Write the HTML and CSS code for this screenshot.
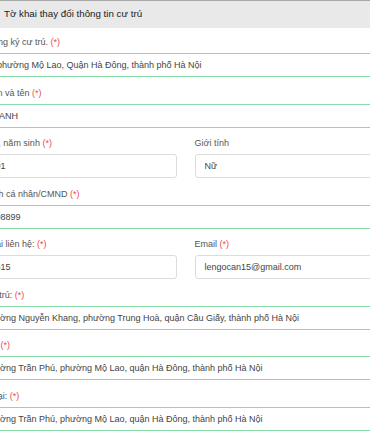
FILE: index.html
```html
<!DOCTYPE html>
<html lang="vi">
<head>
<meta charset="utf-8">
<title>Tờ khai thay đổi thông tin cư trú</title>
<link rel="stylesheet" href="styles.css">
</head>
<body>
<div class="panel">
  <div class="panel-head">Tờ khai thay đổi thông tin cư trú</div>
  <form class="form">
    <div class="field">
      <label class="label">Cơ quan đăng ký cư trú. <span class="req">(*)</span></label>
      <div class="control valid">Công an phường Mộ Lao, Quận Hà Đông, thành phố Hà Nội</div>
    </div>
    <div class="field">
      <label class="label">Họ, chữ đệm và tên <span class="req">(*)</span></label>
      <div class="control valid">LÊ MINH ANH</div>
    </div>
    <div class="row">
      <div class="field">
        <label class="label">Ngày, tháng, năm sinh <span class="req">(*)</span></label>
        <div class="control">19/05/2001</div>
      </div>
      <div class="field">
        <label class="label">Giới tính</label>
        <div class="control">Nữ</div>
      </div>
    </div>
    <div class="field">
      <label class="label">Số định danh cá nhân/CMND <span class="req">(*)</span></label>
      <div class="control valid">001301008899</div>
    </div>
    <div class="row">
      <div class="field">
        <label class="label">Số điện thoại liên hệ: <span class="req">(*)</span></label>
        <div class="control">0912345615</div>
      </div>
      <div class="field">
        <label class="label">Email <span class="req">(*)</span></label>
        <div class="control">lengocan15@gmail.com</div>
      </div>
    </div>
    <div class="field">
      <label class="label">Nơi thường trú: <span class="req">(*)</span></label>
      <div class="control valid">Số 18, đường Nguyễn Khang, phường Trung Hoà, quận Cầu Giấy, thành phố Hà Nội</div>
    </div>
    <div class="field">
      <label class="label">Nơi tạm trú: <span class="req">(*)</span></label>
      <div class="control valid">Số 12, đường Trần Phú, phường Mộ Lao, quận Hà Đông, thành phố Hà Nội</div>
    </div>
    <div class="field">
      <label class="label">Nơi ở hiện tại: <span class="req">(*)</span></label>
      <div class="control valid">Số 12, đường Trần Phú, phường Mộ Lao, quận Hà Đông, thành phố Hà Nội</div>
    </div>
  </form>
</div>
</body>
</html>
```

FILE: styles.css
```css
* {
  box-sizing: border-box;
  margin: 0;
  padding: 0;
}

html,
body {
  background: #fff;
}

body {
  width: 370px;
  height: 440px;
  overflow: hidden;
  font-family: "Liberation Sans", Arial, sans-serif;
}

.panel-head {
  height: 28px;
  background: #e9e9e9;
  border-top: 1px solid #a8a8a8;
  padding-left: 4px;
  font-size: 9.75px;
  line-height: 26px;
  color: #222;
}

.form {
  width: 470.5px;
  margin-left: -49.5px;
  padding-top: 6px;
}

.field {
  margin-bottom: 7.5px;
}

.label {
  display: block;
  font-size: 9px;
  line-height: 16px;
  margin-bottom: 3px;
  color: #555;
}

.req {
  color: #f0474a;
}

.control {
  height: 24px;
  border: 1px solid #dcdcdc;
  border-radius: 3px;
  padding: 0 9px;
  font-size: 9px;
  line-height: 22px;
  color: #444;
  white-space: nowrap;
  overflow: hidden;
}

.control.valid {
  border-color: #86dca4;
}

.row {
  display: grid;
  grid-template-columns: 226.5px 1fr;
  column-gap: 17.5px;
}
```
